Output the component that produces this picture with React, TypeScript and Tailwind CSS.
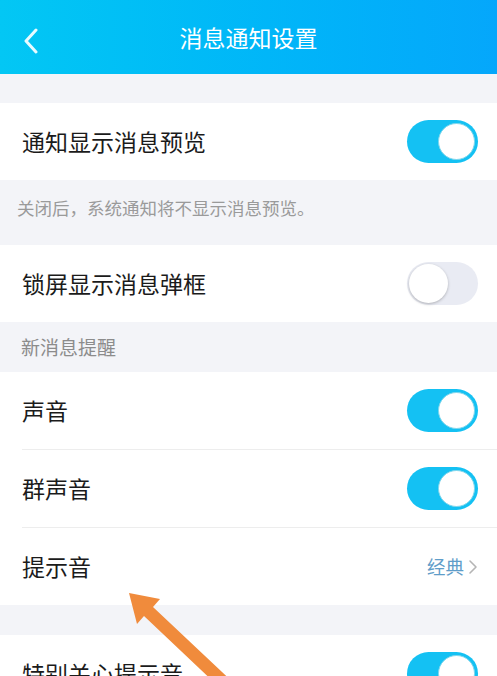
import React from "react";

const font = { fontFamily: '"Noto Sans CJK SC", "Noto Sans", sans-serif' };

function Toggle({ on }: { on: boolean }) {
  if (on) {
    return (
      <div className="w-[71px] h-[43px] rounded-full bg-[#14c1f3] flex items-center justify-end p-[3px]">
        <div className="w-[37px] h-[37px] rounded-full bg-white border-[1px] border-[#7fd6ec]" />
      </div>
    );
  }
  return (
    <div className="w-[71px] h-[43px] rounded-full bg-[#e9ebf3] flex items-center justify-start p-[2px]">
      <div className="w-[39px] h-[39px] rounded-full bg-white shadow-[0_1px_3px_rgba(0,0,0,0.25)]" />
    </div>
  );
}

function Row({ label, children, divider }: { label: string; children: React.ReactNode; divider?: boolean }) {
  return (
    <div className="bg-white">
      <div className="h-[77px] flex items-center justify-between pl-[22px] pr-[19px]">
        <span className="text-[23px] text-[#1b1b1b] leading-none">{label}</span>
        {children}
      </div>
      {divider && <div className="ml-[22px] h-px bg-[#ededed]" />}
    </div>
  );
}

export default function App() {
  return (
    <div className="relative w-[497px] h-[676px] overflow-hidden bg-[#f3f4f8]" style={font}>
      <div className="h-[74px] bg-gradient-to-r from-[#03c7f4] to-[#05a7fb] flex items-center relative">
        <svg className="absolute left-[22px] top-[28px]" width="18" height="26" viewBox="0 0 18 26">
          <path d="M14 2 L4 13 L14 24" fill="none" stroke="#e8fbff" strokeWidth="3" strokeLinecap="round" strokeLinejoin="round" />
        </svg>
        <div className="flex-1 text-center text-white text-[23px] leading-none">消息通知设置</div>
      </div>
      <div className="h-[29px]" />
      <Row label="通知显示消息预览">
        <Toggle on />
      </Row>
      <div className="h-[65px] flex items-center pl-[17px] pb-[10px]">
        <span className="text-[17.5px] text-[#9a9a9a] leading-none">关闭后，系统通知将不显示消息预览。</span>
      </div>
      <Row label="锁屏显示消息弹框">
        <Toggle on={false} />
      </Row>
      <div className="h-[50px] flex items-center pl-[21px] pb-[2px]">
        <span className="text-[19px] text-[#8c8c8c] leading-none">新消息提醒</span>
      </div>
      <Row label="声音" divider>
        <Toggle on />
      </Row>
      <Row label="群声音" divider>
        <Toggle on />
      </Row>
      <Row label="提示音">
        <div className="flex items-center gap-[4px]">
          <span className="text-[18.5px] text-[#5f9dc9] leading-none">经典</span>
          <svg width="10" height="16" viewBox="0 0 10 16">
            <path d="M2 2 L8 8 L2 14" fill="none" stroke="#b5b5b5" strokeWidth="1.6" strokeLinecap="round" strokeLinejoin="round" />
          </svg>
        </div>
      </Row>
      <div className="h-[30px]" />
      <Row label="特别关心提示音">
        <Toggle on />
      </Row>
      <svg className="absolute left-0 top-0 pointer-events-none" width="497" height="676" viewBox="0 0 497 676">
        <polygon
          points="129,593 137,624 144,616 233.5,700.7 242.5,691.3 153,607 160,599"
          fill="#f08b3c"
        />
      </svg>
    </div>
  );
}
